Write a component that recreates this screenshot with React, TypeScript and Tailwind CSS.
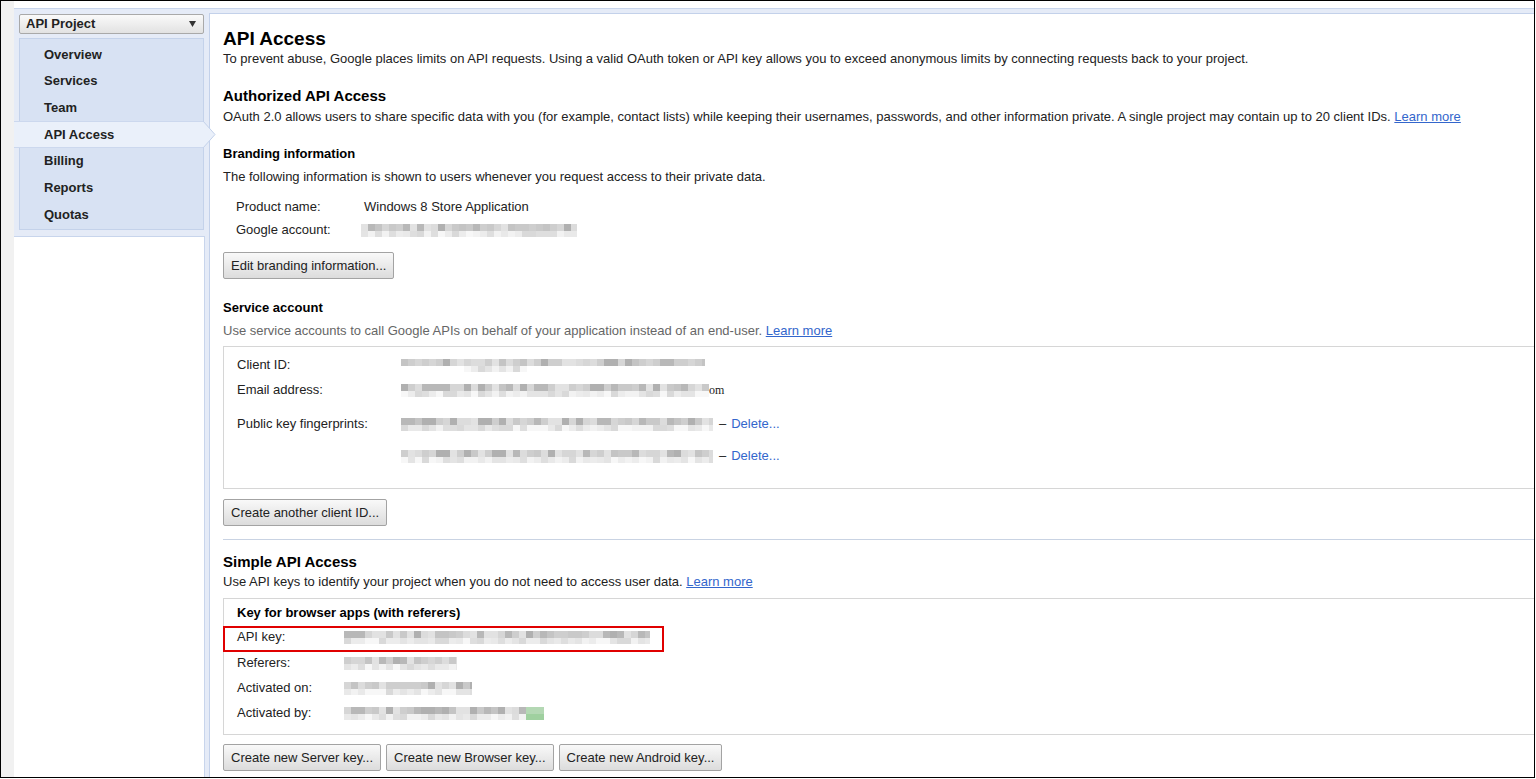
const darkShades = [
  'bg-[#b8b8b8]',
  'bg-[#c4c4c4]',
  'bg-[#cecece]',
  'bg-[#d6d6d6]',
  'bg-[#dcdcdc]',
  'bg-[#c9c9c9]',
  'bg-[#b0b0b0]',
  'bg-[#e2e2e2]',
];

const lightShades = [
  'bg-[#e4e4e4]',
  'bg-[#ececec]',
  'bg-[#f2f2f2]',
  'bg-[#dedede]',
  'bg-[#f7f7f7]',
  'bg-[#e9e9e9]',
  'bg-[#d9d9d9]',
];

function pick<T>(seed: number, i: number, arr: T[]): T {
  const v = Math.abs(Math.sin(seed * 97.13 + i * 13.71) * 10000) % 1;
  return arr[Math.floor(v * arr.length)];
}

interface BlurProps {
  cells: number;
  seed: number;
  className?: string;
  lowCells?: number;
  lowOffset?: number;
  green?: number;
}

// pixelated redaction block, two rows of grey cells
function Blur({ cells, seed, className = '', lowCells, lowOffset = 0, green = 0 }: BlurProps) {
  const top = Array.from({ length: cells });
  const bottom = Array.from({ length: lowCells ?? cells });
  return (
    <div className={`flex flex-col overflow-hidden shrink-0 ${className}`}>
      <div className="flex">
        {top.map((_, i) => (
          <div
            key={i}
            className={`w-[7px] h-[7px] shrink-0 ${i >= cells - green ? 'bg-[#b4d8b4]' : pick(seed, i, darkShades)}`}
          />
        ))}
      </div>
      <div className="flex" style={{ marginLeft: lowOffset * 7 }}>
        {bottom.map((_, i) => (
          <div
            key={i}
            className={`w-[7px] h-[6px] shrink-0 ${i >= cells - green ? 'bg-[#9fd09f]' : pick(seed + 3, i, lightShades)}`}
          />
        ))}
      </div>
    </div>
  );
}

function Button({ children }: { children: React.ReactNode }) {
  return (
    <button className="h-[27px] px-[7px] border border-[#a3a3a3] rounded-[2px] bg-linear-to-b from-[#f9f9f9] to-[#dcdcdc] text-[13px] text-[#222] leading-none whitespace-nowrap">
      {children}
    </button>
  );
}

function LearnMore() {
  return <a className="text-[#3366cc] underline cursor-pointer">Learn more</a>;
}

const navItems = ['Overview', 'Services', 'Team', 'API Access', 'Billing', 'Reports', 'Quotas'];

function Sidebar() {
  return (
    <div className="w-[191px] shrink-0 flex flex-col pt-[5px] relative z-10">
      <div className="ml-[5px] w-[185px] h-[20px] flex items-center justify-between pl-[6px] pr-[7px] border border-[#a9a9a9] rounded-[2px] bg-linear-to-b from-[#fafafa] to-[#e2e2e2]">
        <span className="font-bold text-[13px] text-[#222]">API Project</span>
        <svg width="7" height="6" viewBox="0 0 7 6">
          <polygon points="0,0 7,0 3.5,6" fill="#333" />
        </svg>
      </div>
      <div className="ml-[5px] w-[185px] mt-[4px] border border-[#c4d2ea] bg-[#d8e2f3] pt-[2px] pb-[1px]">
        {navItems.map((item) =>
          item === 'API Access' ? (
            <div
              key={item}
              className="relative -ml-[6px] -mr-[1px] h-[26.7px] flex items-center pl-[30px] bg-[#eaf0fa] border-y border-[#ccd8ee] font-bold text-[13px] text-[#222]"
            >
              {item}
              <svg
                className="absolute -right-[12px] -top-[1px]"
                width="13"
                height="27"
                viewBox="0 0 13 27"
              >
                <polygon points="0,0 12,13.5 0,27" fill="#eaf0fa" />
                <polyline points="0,0 12,13.5 0,27" fill="none" stroke="#c3d1ea" strokeWidth="1" />
              </svg>
            </div>
          ) : (
            <div key={item} className="h-[26.7px] flex items-center pl-[24px] font-bold text-[13px] text-[#222]">
              {item}
            </div>
          ),
        )}
      </div>
      <div className="mt-[6px] flex-1 bg-white border-t border-r border-[#c8d5ec]" />
    </div>
  );
}

export default function App() {
  return (
    <div className="w-[1536px] h-[779px] bg-white overflow-hidden font-['Liberation_Sans',Arial,sans-serif] text-[13px] text-[#222]">
      <div className="w-[1535px] h-[778px] border border-black flex overflow-hidden">
        <div className="w-[13px] shrink-0 bg-[#f1f1f1]" />
        <div className="flex-1 flex flex-col min-w-0">
          <div className="h-[7px] bg-white" />
          <div className="flex-1 flex bg-[#e5ebf7] border-t border-[#c8d5ec]">
            <Sidebar />
            <div className="flex-1 ml-[4px] mt-[4px] bg-white border-l border-t border-[#c3d1ea] pl-[13px] pt-[13px] overflow-hidden">
              <h1 className="text-[19px] font-bold leading-[24px] text-black">API Access</h1>
              <p className="leading-[16px]">
                To prevent abuse, Google places limits on API requests. Using a valid OAuth token or API key allows you
                to exceed anonymous limits by connecting requests back to your project.
              </p>

              <h2 className="mt-[20px] text-[15px] font-bold leading-[18px] text-black">Authorized API Access</h2>
              <p className="mt-[4px] leading-[16px]">
                OAuth 2.0 allows users to share specific data with you (for example, contact lists) while keeping their
                usernames, passwords, and other information private. A single project may contain up to 20 client IDs.{' '}
                <LearnMore />
              </p>

              <h3 className="mt-[21px] font-bold leading-[16px] text-black">Branding information</h3>
              <p className="mt-[7px] leading-[16px]">
                The following information is shown to users whenever you request access to their private data.
              </p>
              <div className="pl-[13px]">
                <div className="mt-[14px] flex h-[16px] items-center">
                  <span className="w-[128px]">Product name:</span>
                  <span>Windows 8 Store Application</span>
                </div>
                <div className="mt-[7px] flex h-[16px] items-center">
                  <span className="w-[125px]">Google account:</span>
                  <Blur cells={31} seed={2} className="w-[216px]" />
                </div>
              </div>
              <div className="mt-[14px]">
                <Button>Edit branding information...</Button>
              </div>

              <h3 className="mt-[21px] font-bold leading-[16px] text-black">Service account</h3>
              <p className="mt-[7px] leading-[16px] text-[#666]">
                Use service accounts to call Google APIs on behalf of your application instead of an end-user.{' '}
                <LearnMore />
              </p>
              <div className="mt-[7px] h-[143px] border border-r-0 border-[#d6d6d6] pl-[13px] pt-[10px]">
                <div className="flex h-[16px] items-center">
                  <span className="w-[164px]">Client ID:</span>
                  <Blur cells={44} seed={5} lowCells={9} lowOffset={9} className="w-[304px]" />
                </div>
                <div className="mt-[9px] flex h-[16px] items-center">
                  <span className="w-[164px]">Email address:</span>
                  <Blur cells={45} seed={7} className="w-[308px]" />
                  <span className="font-['Liberation_Serif',serif] text-[12px]">om</span>
                </div>
                <div className="mt-[18px] flex h-[16px] items-center">
                  <span className="w-[164px]">Public key fingerprints:</span>
                  <Blur cells={45} seed={11} className="w-[312px]" />
                  <span className="ml-[6px]">–</span>
                  <span className="ml-[5px] text-[#3366cc] cursor-pointer">Delete...</span>
                </div>
                <div className="mt-[16px] flex h-[16px] items-center">
                  <span className="w-[164px]" />
                  <Blur cells={45} seed={17} className="w-[312px]" />
                  <span className="ml-[6px]">–</span>
                  <span className="ml-[5px] text-[#3366cc] cursor-pointer">Delete...</span>
                </div>
              </div>
              <div className="mt-[10px]">
                <Button>Create another client ID...</Button>
              </div>

              <div className="mt-[13px] h-px bg-[#c9d3e3]" />

              <h2 className="mt-[13px] text-[15px] font-bold leading-[18px] text-black">Simple API Access</h2>
              <p className="mt-[3px] leading-[16px]">
                Use API keys to identify your project when you do not need to access user data. <LearnMore />
              </p>
              <div className="mt-[8px] h-[137px] border border-r-0 border-[#d6d6d6] pt-[6px]">
                <div className="pl-[13px] font-bold leading-[16px] text-black">Key for browser apps (with referers)</div>
                <div className="relative mt-[8px] flex h-[16px] items-center pl-[13px]">
                  <div className="absolute -left-[1px] -top-[3px] w-[441px] h-[26px] border-2 border-[#e00000]" />
                  <span className="w-[107px]">API key:</span>
                  <Blur cells={44} seed={23} className="w-[306px]" />
                </div>
                <div className="mt-[10px] flex h-[16px] items-center pl-[13px]">
                  <span className="w-[107px]">Referers:</span>
                  <Blur cells={17} seed={29} className="w-[113px]" />
                </div>
                <div className="mt-[9px] flex h-[16px] items-center pl-[13px]">
                  <span className="w-[107px]">Activated on:</span>
                  <Blur cells={19} seed={31} className="w-[128px]" />
                </div>
                <div className="mt-[9px] flex h-[16px] items-center pl-[13px]">
                  <span className="w-[107px]">Activated by:</span>
                  <Blur cells={29} seed={37} green={3} className="w-[200px]" />
                </div>
              </div>
              <div className="mt-[9px] flex gap-[5px]">
                <Button>Create new Server key...</Button>
                <Button>Create new Browser key...</Button>
                <Button>Create new Android key...</Button>
              </div>
            </div>
          </div>
        </div>
      </div>
    </div>
  );
}
